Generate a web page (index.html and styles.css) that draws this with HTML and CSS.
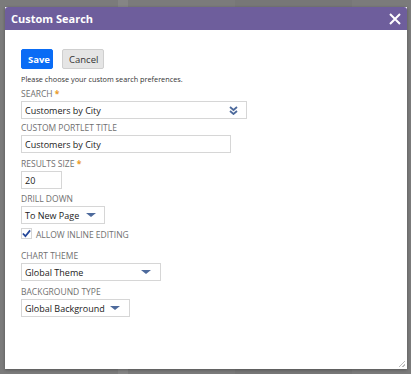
FILE: index.html
```html
<!DOCTYPE html>
<html lang="en">
<head>
    <meta charset="UTF-8">
    <title>Custom Search</title>
    <link rel="stylesheet" href="styles.css">
</head>
<body>
    <div class="backdrop">
        <div class="dialog">
            <header class="dialog-header">
                <span class="dialog-title">Custom Search</span>
                <button class="close-btn" aria-label="Close">
                    <svg width="12" height="12" viewBox="0 0 12 12"><path d="M1 1L11 11M11 1L1 11" stroke="#fff" stroke-width="2"/></svg>
                </button>
            </header>

            <main class="dialog-body">
                <div class="actions">
                    <button class="btn btn-save">Save</button>
                    <button class="btn btn-cancel">Cancel</button>
                </div>
                <p class="intro">Please choose your custom search preferences.</p>

                <div class="field field-search">
                    <label class="field-label">SEARCH <span class="req">*</span></label>
                    <div class="select select-search">
                        <span>Customers by City</span>
                        <svg class="dbl-arrow" width="9" height="9" viewBox="0 0 9 9"><path d="M1 1L4.5 4L8 1M1 5L4.5 8L8 5" fill="none" stroke="#4d6a9c" stroke-width="1.8"/></svg>
                    </div>
                </div>

                <div class="field field-title">
                    <label class="field-label">CUSTOM PORTLET TITLE</label>
                    <div class="input input-title">Customers by City</div>
                </div>

                <div class="field field-size">
                    <label class="field-label">RESULTS SIZE <span class="req">*</span></label>
                    <div class="input input-size">20</div>
                </div>

                <div class="field">
                    <label class="field-label">DRILL DOWN</label>
                    <div class="select select-drill">
                        <span>To New Page</span>
                        <span class="caret"></span>
                    </div>
                </div>

                <div class="check-row">
                    <span class="checkbox">
                        <svg width="10" height="9" viewBox="0 0 10 9"><path d="M1 4.5L3.8 7.5L9 1" fill="none" stroke="#24479a" stroke-width="2"/></svg>
                    </span>
                    <span class="check-label">ALLOW INLINE EDITING</span>
                </div>

                <div class="field field-chart">
                    <label class="field-label">CHART THEME</label>
                    <div class="select select-chart">
                        <span>Global Theme</span>
                        <span class="caret"></span>
                    </div>
                </div>

                <div class="field field-bg">
                    <label class="field-label">BACKGROUND TYPE</label>
                    <div class="select select-bg">
                        <span>Global Background</span>
                        <span class="caret"></span>
                    </div>
                </div>
            </main>
            <span class="grip"></span>
        </div>
    </div>
</body>
</html>
```

FILE: styles.css
```css
body {
    margin: 0;
    background-color: #7b7b7b;
    font-family: "Open Sans", "Liberation Sans", sans-serif;
    color: #333;
}

.backdrop {
    width: 411px;
    height: 374px;
    padding: 7px 4px 0 5px;
    box-sizing: border-box;
    background: linear-gradient(to right, #7b7b7b 0, #7b7b7b 118px, #858585 118px, #858585 128px, #7b7b7b 128px, #7b7b7b 235px, #777 235px, #777 352px, #7b7b7b 352px);
}

.dialog {
    position: relative;
    width: 402px;
    height: 362px;
    background-color: #fff;
    box-shadow: 0 1px 3px rgba(0,0,0,0.3);
    display: flex;
    flex-direction: column;
}

.dialog-header {
    height: 23px;
    flex-shrink: 0;
    background-color: #6e5e9c;
    display: flex;
    align-items: center;
    justify-content: space-between;
    padding: 0 6px 0 6px;
    border-radius: 3px 3px 0 0;
}
.dialog-title {
    color: #fff;
    font-size: 11px;
    font-weight: bold;
}
.close-btn {
    background: none;
    border: none;
    padding: 0;
    display: flex;
    cursor: pointer;
}

.dialog-body {
    padding: 19px 16px 0 16px;
}

.actions {
    display: flex;
    gap: 9px;
    height: 20px;
}
.btn {
    height: 20px;
    font-family: inherit;
    font-size: 9.5px;
    border-radius: 2px;
    padding: 0 6px;
    cursor: pointer;
}
.btn-save {
    width: 32px;
    background-color: #0a6cf5;
    border: 1px solid #0a6cf5;
    color: #fff;
    font-weight: bold;
}
.btn-cancel {
    width: 42px;
    background-color: #e5e5e5;
    border: 1px solid #cfcfcf;
    color: #333;
}

.intro {
    margin: 4px 0 0 0;
    font-size: 7.3px;
    line-height: 12px;
    color: #333;
}

.field {
    margin-top: 4px;
}
.field-search { margin-top: 3px; }
.field-title { margin-top: 3px; }
.field-size { margin-top: 5px; }
.field-chart { margin-top: 10px; }
.field-bg { margin-top: 5px; }

.field-label {
    display: block;
    font-size: 8.5px;
    color: #707070;
    line-height: 12px;
    margin-bottom: 1px;
}
.req {
    color: #e99a1e;
    font-weight: bold;
}

.select,
.input {
    height: 18px;
    border: 1px solid #d6d6d6;
    box-sizing: border-box;
    display: flex;
    align-items: center;
    justify-content: space-between;
    padding: 0 5px 0 3px;
    font-size: 9px;
    color: #222;
    white-space: nowrap;
}
.select-search { width: 226px; padding-right: 8px; }
.input-title { width: 210px; }
.input-size { width: 41px; }
.select-drill { width: 84px; padding-right: 8px; }
.select-chart { width: 140px; padding-right: 9px; }
.select-bg { width: 109px; padding-right: 9px; }

.caret {
    width: 0;
    height: 0;
    border-left: 5px solid transparent;
    border-right: 5px solid transparent;
    border-top: 4px solid #4d6a9c;
}

.check-row {
    display: flex;
    align-items: center;
    gap: 4px;
    margin-top: 3px;
}
.checkbox {
    width: 11px;
    height: 11px;
    border: 1px solid #d6d6d6;
    box-sizing: border-box;
    display: flex;
    align-items: center;
    justify-content: center;
}
.check-label {
    font-size: 8.5px;
    color: #707070;
    margin-top: 2px;
}

.grip {
    position: absolute;
    right: 2px;
    bottom: 2px;
    width: 6px;
    height: 6px;
    background: linear-gradient(135deg, transparent 45%, #bbb 45%, #bbb 55%, transparent 55%, transparent 75%, #bbb 75%, #bbb 85%, transparent 85%);
}
```
